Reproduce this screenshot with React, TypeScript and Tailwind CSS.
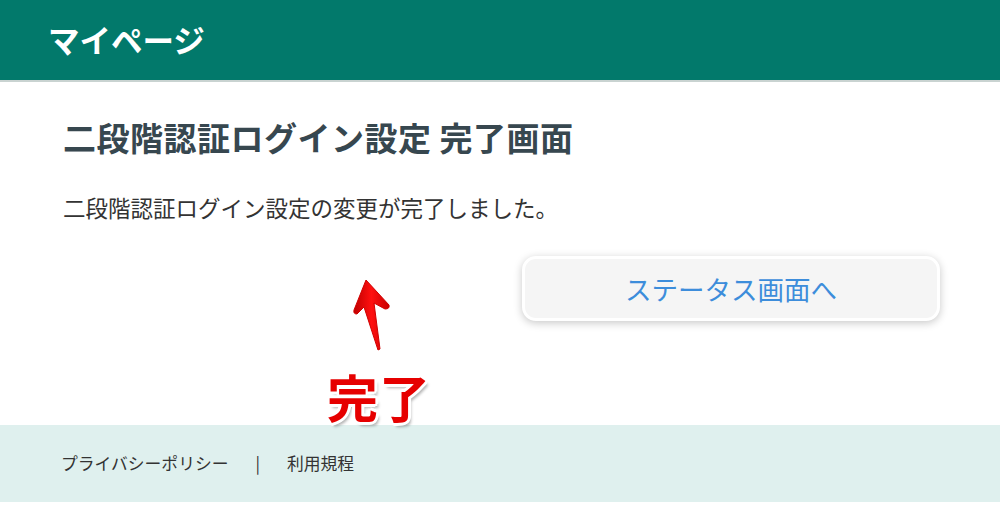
import React from "react";

const jp = { fontFamily: '"Noto Sans CJK JP", "Noto Sans", sans-serif' };

function Arrow() {
  return (
    <svg className="absolute left-[350px] top-[276px]" width="44" height="78" viewBox="350 276 44 78">
      <defs>
        <linearGradient id="ag" x1="0" y1="0" x2="1" y2="0">
          <stop offset="0" stopColor="#c00000" />
          <stop offset="0.5" stopColor="#ff1010" />
          <stop offset="1" stopColor="#c80000" />
        </linearGradient>
      </defs>
      <path
        d="M366 280 L389 305 Q390 309 385 309 L374 303 L380 349 L378 350 L364 307 L357 314 Q353 314 354 310 Z"
        fill="url(#ag)"
        stroke="#d00000"
        strokeWidth="1"
        strokeLinejoin="round"
      />
    </svg>
  );
}

export default function App() {
  return (
    <div className="w-[1000px] h-[512px] bg-white" style={jp}>
      <header className="h-[80px] bg-[#02796b] border-b-2 border-[#c9d3d1] box-content flex items-center pl-[48px]">
        <h1 className="text-[31.5px] font-bold text-white leading-none">マイページ</h1>
      </header>

      <main className="relative h-[343px] px-[63px] pt-[36px]">
        <h2 className="text-[33px] leading-[38px] font-bold text-[#37474f] tracking-[0.5px]">
          二段階認証ログイン設定 完了画面
        </h2>
        <p className="mt-[35px] text-[22.5px] leading-[33px] text-[#333]">
          二段階認証ログイン設定の変更が完了しました。
        </p>
        <div className="flex justify-end mt-[32px] -mr-[3px]">
          <button className="w-[418px] h-[65px] rounded-[14px] border-[3px] border-white bg-[#f5f5f5] shadow-[0_2px_8px_rgba(0,0,0,0.22)] text-[26.5px] text-[#3d8ddb] flex items-center justify-center">
            ステータス画面へ
          </button>
        </div>

        <div className="absolute inset-0 -top-[82px] pointer-events-none">
          <Arrow />
          <div
            className="absolute left-[327px] top-[371px] text-[51px] font-bold leading-none text-[#e60000] tracking-[1px]"
            style={{
              textShadow:
                "3px 0 0 #fff, -3px 0 0 #fff, 0 3px 0 #fff, 0 -3px 0 #fff, 2px 2px 0 #fff, -2px -2px 0 #fff, 2px -2px 0 #fff, -2px 2px 0 #fff, 3px 4px 3px rgba(0,0,0,0.3)",
            }}
          >
            完了
          </div>
        </div>
      </main>

      <footer className="h-[77px] bg-[#dff0ee] flex items-center pl-[61px] text-[16.8px] text-[#333]">
        <span>プライバシーポリシー</span>
        <span className="ml-[27px]">|</span>
        <span className="ml-[27px]">利用規程</span>
      </footer>
    </div>
  );
}
